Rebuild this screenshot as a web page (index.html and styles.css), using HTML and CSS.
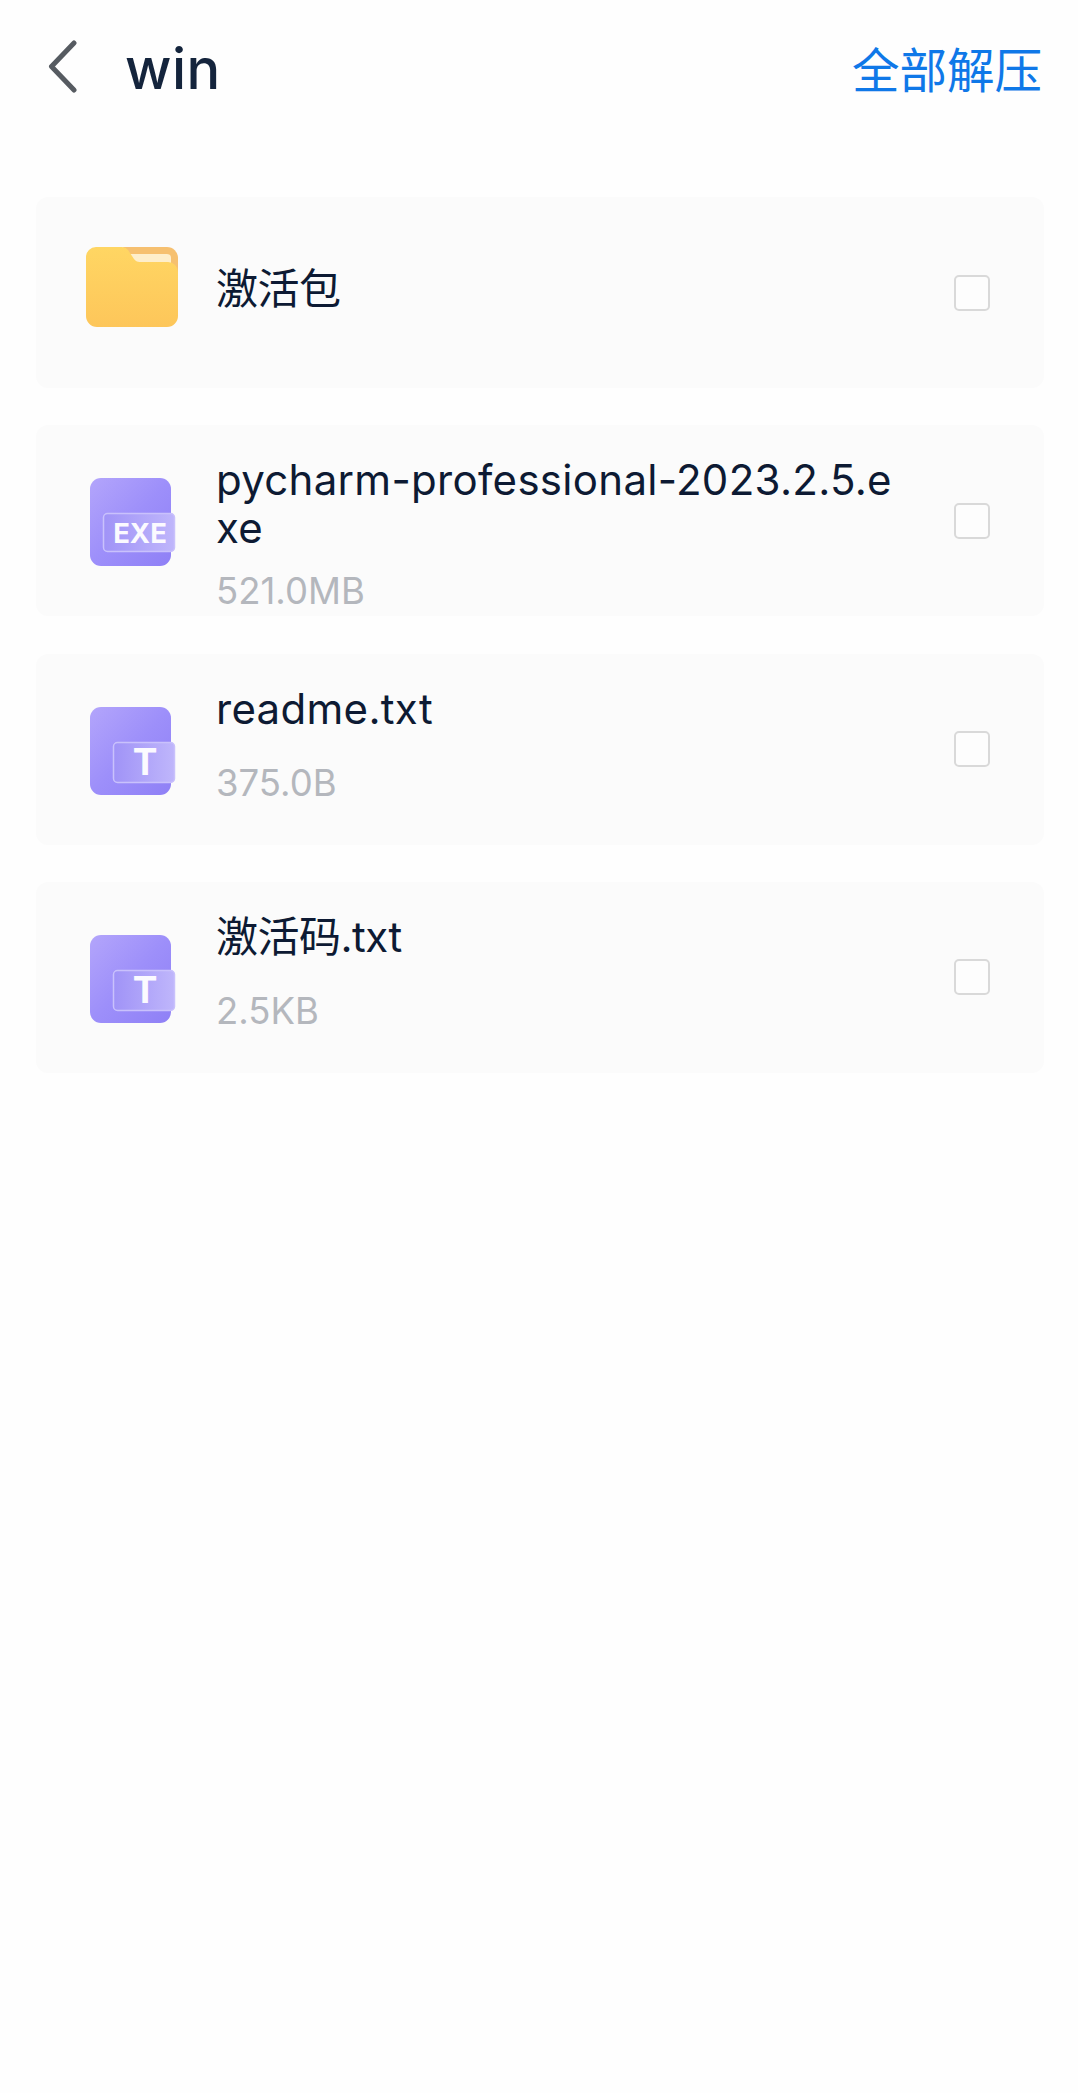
FILE: index.html
```html
<!DOCTYPE html>
<html lang="zh">
<head>
	<meta charset="utf-8"/>
	<title>win</title>
	<link rel="stylesheet" href="styles.css">
</head>
<body>
	<svg class="defs" width="0" height="0">
		<defs>
			<linearGradient id="doc-body" x1="0" y1="0" x2="1" y2="1">
				<stop offset="0" stop-color="#b3a5fb"/>
				<stop offset="0.5" stop-color="#9d8ffa"/>
				<stop offset="1" stop-color="#8f80f6"/>
			</linearGradient>
			<linearGradient id="doc-label" x1="0" y1="0" x2="1" y2="0">
				<stop offset="0" stop-color="#a093f7"/>
				<stop offset="1" stop-color="#bfb6fb"/>
			</linearGradient>
			<linearGradient id="folder-front" x1="0" y1="0" x2="0" y2="1">
				<stop offset="0" stop-color="#ffd663"/>
				<stop offset="1" stop-color="#fdc65a"/>
			</linearGradient>
		</defs>
	</svg>

	<header class="topbar">
		<svg class="back" width="30" height="54" viewBox="0 0 30 54">
			<path d="M27 3 4.500 26.500 27 50" fill="none" stroke="#565b61" stroke-width="5" stroke-linecap="round" stroke-linejoin="round"/>
		</svg>
		<h1 class="title">win</h1>
		<a class="extract-all">全部解压</a>
	</header>

	<main class="list">
		<div class="row row-folder">
			<div class="icon">
				<svg class="folder" width="94" height="82" viewBox="0 0 94 82">
					<path d="M38 1H82a11 11 0 0 1 11 11V30H50Z" fill="#f6c070"/>
					<path d="M44 8H82a4 4 0 0 1 4 4V30H50Z" fill="#feeecb"/>
					<path d="M11 1H37a8 8 0 0 1 6 3l6 9a7 7 0 0 0 6 3H83a10 10 0 0 1 10 10V70a11 11 0 0 1-11 11H12A11 11 0 0 1 1 70V11A10 10 0 0 1 11 1Z" fill="url(#folder-front)"/>
				</svg>
			</div>
			<div class="info">
				<div class="name name-cjk">激活包</div>
			</div>
			<span class="check"></span>
		</div>
		<div class="row">
			<div class="icon">
				<svg class="doc" width="90" height="90" viewBox="0 0 90 90">
					<rect x="2" y="1" width="81" height="88" rx="11" fill="url(#doc-body)"/>
					<rect x="15.500" y="36.500" width="71" height="38" rx="4" fill="url(#doc-label)" stroke="#c9c1fc" stroke-width="1.500"/>
					<text class="doc-text" x="52" y="66" text-anchor="middle" font-size="27.500">EXE</text>
				</svg>
			</div>
			<div class="info">
				<div class="name">pycharm-professional-2023.2.5.exe</div>
				<div class="size">521.0MB</div>
			</div>
			<span class="check"></span>
		</div>
		<div class="row">
			<div class="icon">
				<svg class="doc" width="90" height="90" viewBox="0 0 90 90">
					<rect x="2" y="1" width="81" height="88" rx="11" fill="url(#doc-body)"/>
					<rect x="25.500" y="36.500" width="61" height="40" rx="4" fill="url(#doc-label)" stroke="#c9c1fc" stroke-width="1.500"/>
					<text class="doc-text" x="57" y="69" text-anchor="middle" font-size="37">T</text>
				</svg>
			</div>
			<div class="info">
				<div class="name">readme.txt</div>
				<div class="size">375.0B</div>
			</div>
			<span class="check"></span>
		</div>
		<div class="row">
			<div class="icon">
				<svg class="doc" width="90" height="90" viewBox="0 0 90 90">
					<rect x="2" y="1" width="81" height="88" rx="11" fill="url(#doc-body)"/>
					<rect x="25.500" y="36.500" width="61" height="40" rx="4" fill="url(#doc-label)" stroke="#c9c1fc" stroke-width="1.500"/>
					<text class="doc-text" x="57" y="69" text-anchor="middle" font-size="37">T</text>
				</svg>
			</div>
			<div class="info">
				<div class="name name-cjk">激活码.txt</div>
				<div class="size">2.5KB</div>
			</div>
			<span class="check"></span>
		</div>
	</main>
</body>
</html>
```

FILE: styles.css
```css
html, body {
	margin: 0;
	height: 100%;
}
body {
	background: #fefefe;
	font-family: Inter, "Noto Sans CJK SC", sans-serif;
	color: #0d1a33;
}
.defs {
	display: block;
}
.topbar {
	display: flex;
	align-items: center;
	height: 134px;
	padding: 0 36px 0 47px;
}
.back {
	margin-right: 48px;
}
.title {
	margin: 0;
	padding-top: 4px;
	font-size: 56px;
	font-weight: 500;
	letter-spacing: 0.5px;
	color: #14243c;
}
.extract-all {
	margin-left: auto;
	font-size: 47.500px;
	color: #0f78e8;
}
.list {
	display: flex;
	flex-direction: column;
	gap: 37.330px;
	margin: 63px 34px 0 36px;
}
.row {
	display: flex;
	align-items: center;
	height: 191px;
	padding: 0 54px 0 49px;
	background: #fbfbfb;
	border-radius: 12px;
	overflow: hidden;
}
.icon {
	flex: none;
	width: 94px;
	margin-top: 3px;
	margin-right: 37px;
}
.row-folder .icon {
	margin-top: 0;
	margin-bottom: 11px;
}
.icon svg {
	display: block;
}
.doc {
	margin-left: 3px;
}
.doc-text {
	font-family: Inter, sans-serif;
	font-weight: 700;
	fill: #fbfaff;
}
.info {
	flex: none;
	align-self: flex-start;
	width: 690px;
	padding-top: 31px;
}
.row-folder .info {
	padding-top: 68px;
}
.name {
	min-height: 59px;
	font-size: 42px;
	line-height: 48px;
	letter-spacing: 0.3px;
	word-break: break-all;
}
.name-cjk {
	letter-spacing: -0.5px;
}
.size {
	margin-top: 15px;
	font-size: 36.500px;
	line-height: 48px;
	color: #b4b7bd;
}
.check {
	flex: none;
	box-sizing: border-box;
	width: 36px;
	height: 36px;
	margin-left: auto;
	background: #fdfdfd;
	border: 2px solid #d9d9d9;
	border-radius: 5px;
}
```
